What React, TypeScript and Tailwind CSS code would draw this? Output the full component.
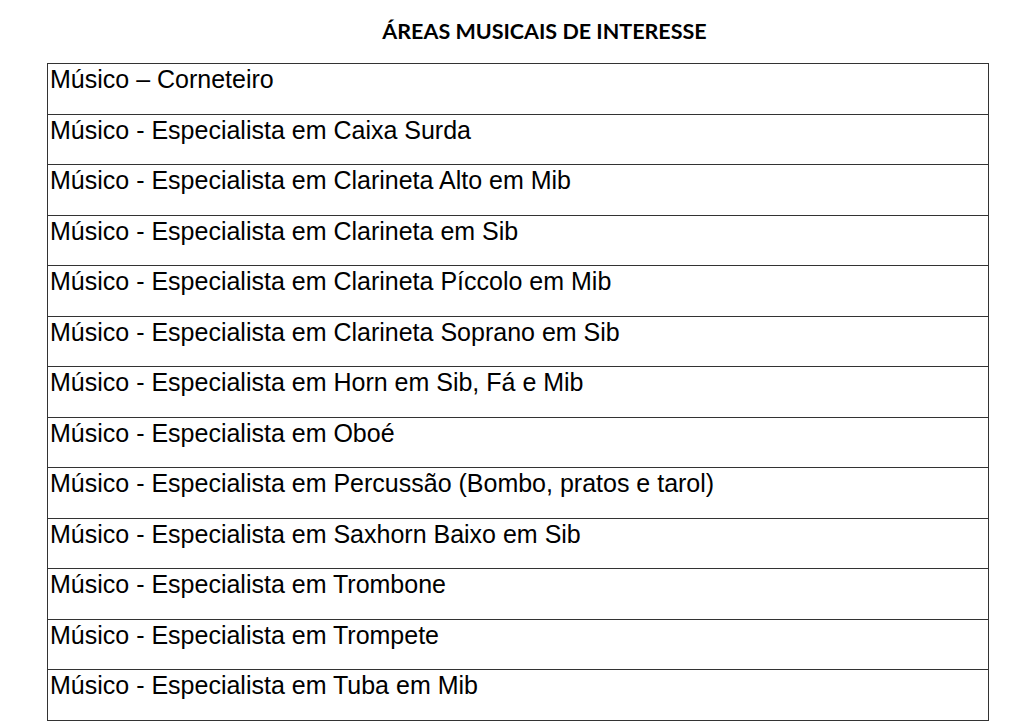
import React from "react";

const areas = [
  "Músico – Corneteiro",
  "Músico - Especialista em Caixa Surda",
  "Músico - Especialista em Clarineta Alto em Mib",
  "Músico - Especialista em Clarineta em Sib",
  "Músico - Especialista em Clarineta Píccolo em Mib",
  "Músico - Especialista em Clarineta Soprano em Sib",
  "Músico - Especialista em Horn em Sib, Fá e Mib",
  "Músico - Especialista em Oboé",
  "Músico - Especialista em Percussão (Bombo, pratos e tarol)",
  "Músico - Especialista em Saxhorn Baixo em Sib",
  "Músico - Especialista em Trombone",
  "Músico - Especialista em Trompete",
  "Músico - Especialista em Tuba em Mib",
];

const App = () => {
  return (
    <div className="w-[1036px] h-[722px] bg-white overflow-hidden">
      {/* Title */}
      <div className="pt-[16px] pl-[53px] h-[63px] text-center font-['Lato','Open_Sans',sans-serif] font-bold text-[21.5px] leading-[30px] text-black">
        ÁREAS MUSICAIS DE INTERESSE
      </div>

      {/* Table */}
      <div className="ml-[47px] w-[942px] border border-[#333] border-b-0">
        {areas.map((area) => (
          <div
            key={area}
            className="h-[50.5px] border-b border-[#333] pl-[2px] pt-[1px] font-['Liberation_Sans',Arial,sans-serif] text-[25px] leading-[28px] text-black whitespace-nowrap"
          >
            {area}
          </div>
        ))}
      </div>
    </div>
  );
};

export default App;
